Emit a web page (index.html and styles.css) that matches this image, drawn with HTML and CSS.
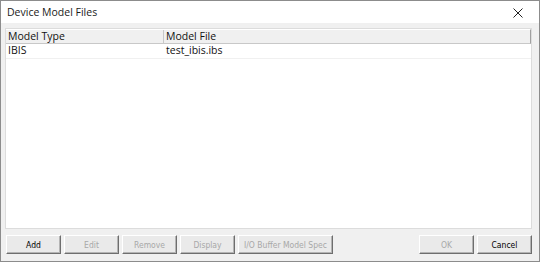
FILE: index.html
```html
<html>
<head>
<meta charset="UTF-8">
<link rel="stylesheet" href="styles.css">
<title>Device Model Files</title>
</head>
<body>
<div class="window">
    <div class="titlebar">
        <span class="title">Device Model Files</span>
        <span class="close">
            <svg width="10" height="10" viewBox="0 0 10 10"><path d="M0.5 0.5L9.5 9.5M9.5 0.5L0.5 9.5" stroke="#222" stroke-width="1"/></svg>
        </span>
    </div>
    <div class="client">
        <!-- model list -->
        <div class="list">
            <div class="header">
                <div class="col col-type">Model Type</div>
                <div class="col col-file">Model File</div>
            </div>
            <div class="row">
                <div class="col col-type">IBIS</div>
                <div class="col col-file">test_ibis.ibs</div>
            </div>
        </div>
        <div class="buttons">
            <button class="btn">Add</button>
            <button class="btn" disabled>Edit</button>
            <button class="btn" disabled>Remove</button>
            <button class="btn" disabled>Display</button>
            <button class="btn wide" disabled>I/O Buffer Model Spec</button>
            <div class="spacer"></div>
            <button class="btn" disabled>OK</button>
            <button class="btn">Cancel</button>
        </div>
    </div>
</div>
</body>
</html>
```
FILE: styles.css
```css
*{
    box-sizing: border-box;
}
body{
    margin: 0;
    font-family: "Open Sans", "Noto Sans", sans-serif;
    background: #f0f0f0;
}
.window{
    width: 540px;
    height: 262px;
    border: 1px solid #8c8c8c;
    display: flex;
    flex-direction: column;
    background: #f0f0f0;
}
.titlebar{
    height: 22px;
    background: #ffffff;
    display: flex;
    align-items: center;
    justify-content: space-between;
    padding: 0 16px 0 6px;
}
.title{
    font-size: 10.5px;
    color: #1a1a1a;
}
.close{
    display: flex;
    margin-top: 2px;
}
.client{
    flex: 1;
    display: flex;
    flex-direction: column;
    padding: 5px 7px 7px 4px;
}
.list{
    flex: 1;
    background: #ffffff;
    border: 1px solid #dcdcdc;
    font-size: 10.5px;
    color: #111;
}
.header{
    display: flex;
    height: 15px;
    background: #f0f0f0;
    border-bottom: 1px solid #c8c8c8;
    border-right: 1px solid #a0a0a0;
    border-top: 1px solid #ffffff;
}
.row{
    display: flex;
    height: 15px;
    border-bottom: 1px solid #f0f0f0;
}
.col{
    padding-left: 2px;
    line-height: 13px;
    white-space: nowrap;
}
.col-type{
    width: 158px;
}
.header .col-type{
    border-right: 1px solid #c8c8c8;
}
.col-file{
    flex: 1;
}
.buttons{
    display: flex;
    gap: 3px;
    margin-top: 6px;
    height: 19px;
    padding-left: 1px;
}
.btn{
    width: 55px;
    height: 19px;
    font-family: "DejaVu Sans Condensed", "DejaVu Sans", sans-serif;
    font-size: 8.5px;
    color: #000;
    background: #eaeaea;
    border: 1px solid;
    border-color: #ffffff #6e6e6e #6e6e6e #ffffff;
    box-shadow: inset -1px -1px 0 #b4b4b4;
    padding: 0;
}
.btn:disabled{
    color: #a8a8a8;
}
.btn.wide{
    width: 95px;
}
.spacer{
    flex: 1;
}
```
